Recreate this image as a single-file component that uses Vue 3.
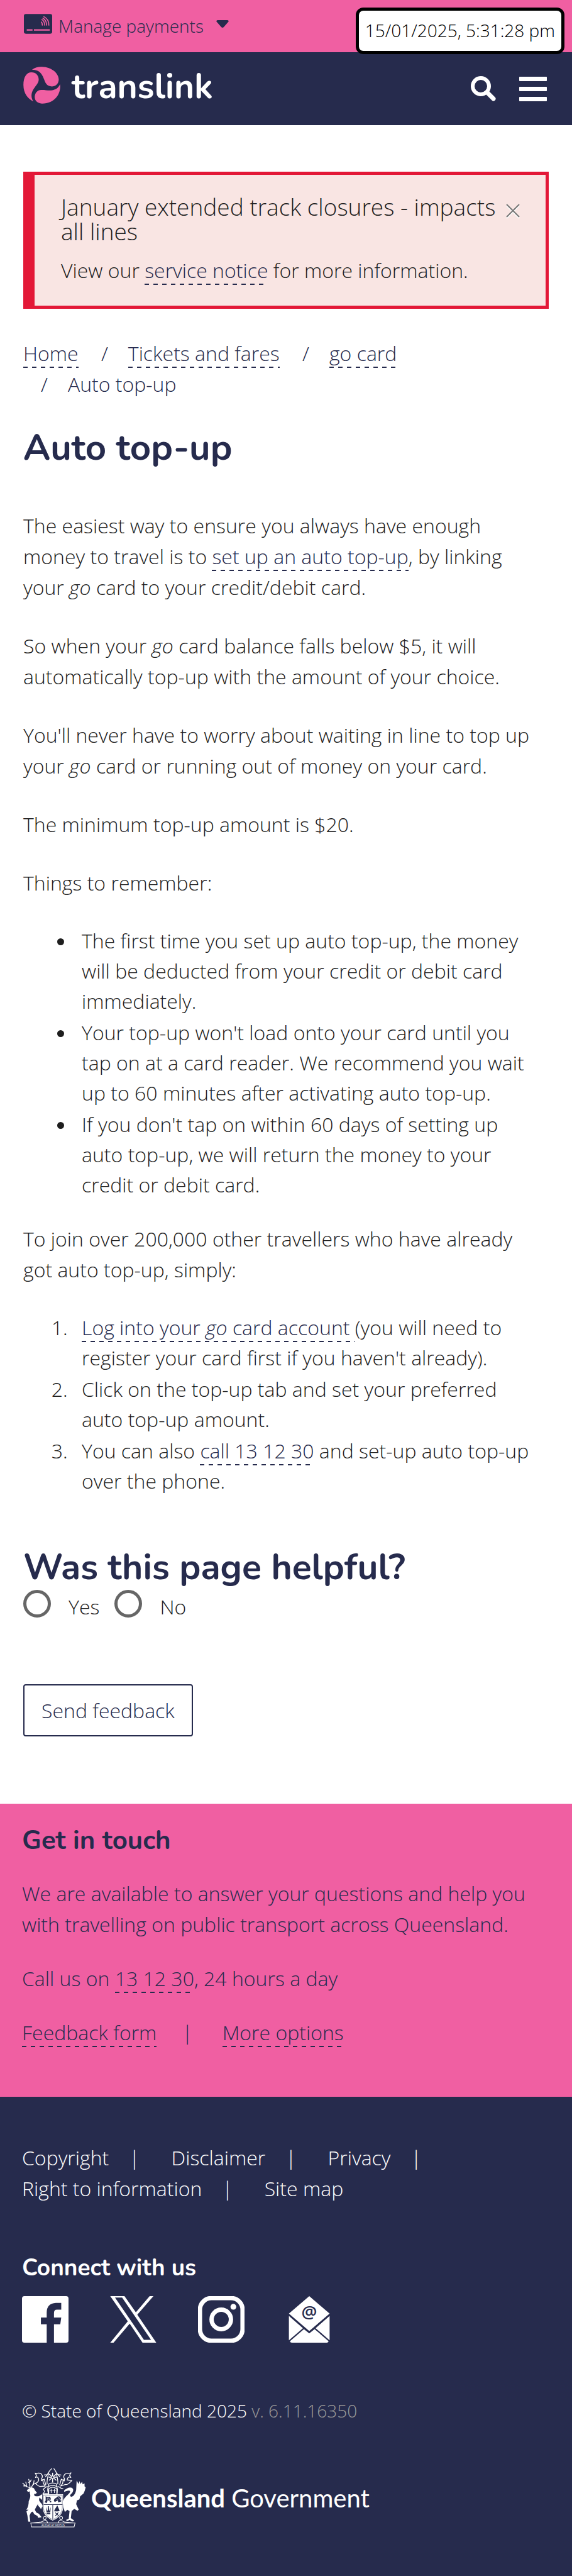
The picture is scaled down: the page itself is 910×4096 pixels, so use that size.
<script setup>
import { ref } from 'vue'

const alertOpen = ref(true)
const helpful = ref('')
const footerLinks = ['Copyright', 'Disclaimer', 'Privacy', 'Right to information', 'Site map']
</script>

<template>
  <div class="page">
    <header>
      <div class="topbar">
        <button class="manage" type="button">
          <svg class="card-icon" viewBox="0 0 59 41" aria-hidden="true">
            <rect width="59" height="41" rx="4" fill="#262b4d" />
            <g fill="none" stroke="#f05fa2" stroke-width="2">
              <path d="M36 16q3 3 2.500 8" />
              <path d="M37 11q7 4 6 13" />
              <path d="M39 8q9 5 8 16" />
              <path d="M41 5q12 6 11 19" />
            </g>
            <path d="M6 33h12M21 33h33" stroke="#f05fa2" stroke-width="3" />
          </svg>
          <span>Manage payments</span>
          <svg class="caret" viewBox="0 0 20 12" aria-hidden="true">
            <path d="M2 0h16q3 1 1 3l-7 8q-2 2-4 0l-7-8q-2-2 1-3z" fill="#262b4d" />
          </svg>
        </button>
        <time class="clock">15/01/2025, 5:31:28 pm</time>
      </div>
      <div class="navbar">
        <a class="brand" href="#">
          <svg viewBox="53 50 233 233" aria-hidden="true">
            <g fill="#f05fa2">
              <path d="M108 70C125 55 150 50 170 51C235 52 277 95 276 132C274 160 255 174 232 174C205 173 194 158 186 135C175 105 160 68 108 70Z" />
              <path d="M116 268C85 255 54 220 54 165C54 115 75 86 104 86C132 86 150 105 150 131C150 150 138 162 125 180C105 205 96 235 116 268Z" />
              <path d="M284 161C292 215 255 283 170 282C140 280 125 262 125 240C126 212 145 196 165 196C190 195 210 201 235 198C258 194 272 186 284 161Z" />
            </g>
          </svg>
          <span>translink</span>
        </a>
        <div class="nav-actions">
          <button class="icon-button" type="button" aria-label="Search">
            <svg class="search" viewBox="0 0 40 40" aria-hidden="true">
              <circle cx="16" cy="16" r="13" fill="none" stroke="#fff" stroke-width="6" />
              <path d="M26 26l10 10" stroke="#fff" stroke-width="7" stroke-linecap="round" />
            </svg>
          </button>
          <button class="icon-button burger" type="button" aria-label="Menu">
            <i></i><i></i><i></i>
          </button>
        </div>
      </div>
    </header>

    <main>
      <section v-if="alertOpen" class="alert" role="alert">
        <div class="alert-head">
          <h2>January extended track closures - impacts all lines</h2>
          <button type="button" aria-label="Close" @click="alertOpen = false">
            <svg viewBox="0 0 22 24" aria-hidden="true">
              <path d="M1 3l20 20M21 3L1 23" stroke="#fff" stroke-width="2" />
              <path d="M1 1l20 20M21 1L1 21" stroke="#777" stroke-width="2" />
            </svg>
          </button>
        </div>
        <p>View our <a href="#">service notice</a> for more information.</p>
      </section>

      <nav aria-label="Breadcrumb">
        <ol class="crumbs">
          <li><a href="#">Home</a></li>
          {{ ' ' }}
          <li><a href="#">Tickets and fares</a></li>
          {{ ' ' }}
          <li><a href="#">go card</a></li>
          {{ ' ' }}
          <li>Auto top-up</li>
        </ol>
      </nav>

      <h1>Auto top-up</h1>

      <article>
        <p>The easiest way to ensure you always have enough money to travel is to <a href="#">set up an auto top-up</a>, by linking your <em>go</em> card to your credit/debit card.</p>
        <p>So when your <em>go</em> card balance falls below $5, it will automatically top-up with the amount of your choice.</p>
        <p>You'll never have to worry about waiting in line to top up your <em>go</em> card or running out of money on your card.</p>
        <p>The minimum top-up amount is $20.</p>
        <p>Things to remember:</p>
        <ul>
          <li>The first time you set up auto top-up, the money will be deducted from your credit or debit card immediately.</li>
          <li>Your top-up won't load onto your card until you tap on at a card reader. We recommend you wait up to 60 minutes after activating auto top-up.</li>
          <li>If you don't tap on within 60 days of setting up auto top-up, we will return the money to your credit or debit card.</li>
        </ul>
        <p>To join over 200,000 other travellers who have already got auto top-up, simply:</p>
        <ol>
          <li><a href="#">Log into your <em>go</em> card account </a>(you will need to register your card first if you haven't already).</li>
          <li>Click on the top-up tab and set your preferred auto top-up amount.</li>
          <li>You can also <a href="#">call 13 12 30</a> and set-up auto top-up over the phone.</li>
        </ol>
      </article>

      <form class="feedback" @submit.prevent>
        <h2 id="helpful-title">Was this page helpful?</h2>
        <div class="radios" role="radiogroup" aria-labelledby="helpful-title">
          <input id="yes" v-model="helpful" type="radio" name="helpful" value="yes" />
          <label for="yes">Yes</label>
          <input id="no" v-model="helpful" type="radio" name="helpful" value="no" />
          <label for="no">No</label>
        </div>
        <button class="send" type="submit">Send feedback</button>
      </form>
    </main>

    <section class="touch">
      <h2>Get in touch</h2>
      <p>We are available to answer your questions and help you with travelling on public transport across Queensland.</p>
      <p>Call us on <a href="#">13 12 30</a>, 24 hours a day</p>
      <p class="touch-links"><a href="#">Feedback form</a><span>|</span><a href="#">More options</a></p>
    </section>

    <footer>
      <ul class="links">
        <li v-for="(link, i) in footerLinks" :key="link">
          <a href="#">{{ link }}</a><span v-if="i < footerLinks.length - 1">|</span>
        </li>
      </ul>

      <h2>Connect with us</h2>
      <div class="social">
        <a href="#" aria-label="Facebook">
          <svg viewBox="0 0 96 96"><path fill="#fff" d="M5 0H91Q96 0 96 5V91Q96 96 91 96H66V58H79L81 44H66V35Q66 28 72 28H81V14H70Q51 15 51 34V44H39V58H51V96H5Q0 96 0 91V5Q0 0 5 0Z" /></svg>
        </a>
        <a href="#" aria-label="X">
          <svg viewBox="0 0 97 98"><path fill="#fff" fill-rule="evenodd" d="M0 0H30L54 34L83 0H91L57 39L97 98H68L41 58L7 98H0L37 53ZM10 3L71 92H86L25 3Z" /></svg>
        </a>
        <a href="#" aria-label="Instagram">
          <svg viewBox="0 0 96 96"><g fill="none" stroke="#fff"><rect x="4" y="4" width="88" height="88" rx="24" stroke-width="9" /><circle cx="48" cy="48" r="20" stroke-width="9" /></g><circle cx="73" cy="22" r="6" fill="#fff" /></svg>
        </a>
        <a href="#" aria-label="Email">
          <svg viewBox="-6 0 96 96"><g fill="#fff"><path d="M42 0L84 36L42 72L0 36Z" /><path d="M0 41L29 66L0 91ZM84 41L55 66L84 91ZM31 68L42 77L53 68L82 93Q81 96 78 96H6Q3 96 2 93Z" /></g><text x="42" y="46" text-anchor="middle" font-family="Open Sans, sans-serif" font-size="36" font-weight="600" fill="#262b4d">@</text></svg>
        </a>
      </div>

      <p class="copyright">© State of Queensland 2025 <span>v. 6.11.16350</span></p>

      <a class="government" href="#">
        <svg viewBox="53 32 396 370" aria-hidden="true">
          <g fill="none" stroke="#fff" stroke-width="5" stroke-linecap="round" stroke-linejoin="round">
            <path d="M102 158C94 150 82 150 75 144L57 127M76 144L63 144M82 149L76 120M104 157C98 140 102 122 94 103M99 128L91 120M110 157C112 140 128 138 127 111M119 138L129 130M103 118L109 107" />
            <path d="M208 132C205 105 214 88 218 58M274 132C278 105 268 88 264 58M218 60C222 48 230 45 236 37M264 60C260 48 254 45 250 37M216 64L198 88M266 64L287 88M208 74L190 76M276 74L294 76" />
            <path d="M134 65C145 70 155 58 172 70C180 80 180 92 172 100L172 112L190 102L200 138M134 65L142 78L136 92C148 84 155 92 156 108C152 120 146 126 134 128C144 134 150 146 164 147L196 145L186 130L180 105" />
            <path d="M356 63C343 70 331 60 318 72C308 82 310 92 316 100L314 113L296 102L286 138M356 63L347 78L355 92C342 84 333 94 332 107L362 110L350 122C342 128 335 140 322 135L292 145L304 130L308 105" />
            <path d="M218 132C230 124 252 124 266 132V147C250 140 232 140 218 147Z" />
            <path d="M210 148C190 150 196 160 184 164C190 172 198 180 182 192L214 190M274 148C292 150 286 160 306 162M216 148C205 170 215 180 216 193M268 148C276 170 270 180 270 193" />
            <path d="M218 193V162Q242 142 268 162V193" />
            <path d="M233 163V186M226 171H240M253 163V186M246 171H260" stroke-width="4" />
            <path d="M222 72L263 108M263 72L222 108M242 65V120M220 90H266" stroke-width="6" />
          </g>
          <circle cx="242" cy="90" r="7" fill="#262b4d" stroke="#fff" stroke-width="3" />
          <g fill="#fff">
            <path d="M82 171C92 162 101 157 111 154C122 154 130 160 132 170L145 187L136 194C130 190 127 193 128 201C134 211 145 208 158 207L177 196V231L160 216L158 232C166 252 178 252 180 270L170 288C163 273 149 270 151 256C145 268 136 280 132 292L141 309L157 316L174 338L153 342L148 330L128 319L119 303L108 309L99 328L104 366L91 365L86 328L80 302L93 291L79 292C90 278 94 257 94 239C101 223 108 207 101 190L101 178L89 181Z" />
            <path d="M315 169C330 162 341 148 361 156C376 165 370 183 356 195C347 203 350 210 359 211C374 208 384 190 388 168L391 111L403 132L409 114L414 132L425 118L428 134L440 128L440 147L447 153L441 174L434 191L413 208L408 228L393 234L388 257L404 291L396 298L376 286L360 300L355 344L377 359L365 364L348 355L329 362L326 354L342 347L347 300L333 292L318 306L310 280L304 246C309 223 324 211 339 196C350 185 354 176 347 174C336 171 327 176 313 181Z" />
            <path d="M180 196H307V262C312 315 279 343 243 359C207 342 176 315 181 262Z" />
          </g>
          <g fill="none" stroke="#262b4d" stroke-width="2">
            <path d="M185 201H302V264C307 310 277 337 243 353C210 337 181 310 186 264Z" />
            <path d="M186 260H303M243 262V352" stroke-width="4" />
          </g>
          <g fill="#262b4d">
            <path d="M199 207C213 222 219 205 228 215C237 231 221 241 211 235L206 250L192 245L199 235Z" /><circle cx="229" cy="241" r="5" />
            <path d="M250 237C250 220 267 219 272 210C288 202 302 219 287 233C299 232 300 243 285 243C269 252 282 226 267 237L256 243Z" />
            <path d="M203 274L211 301L214 270H219L220 301L230 275L228 305H204ZM205 309H228V319H205ZM271 265L286 298L276 302H253V294Z" />
          </g>
          <g fill="none" stroke="#fff" stroke-width="2"><circle cx="215" cy="226" r="7" /><path d="M275 217Q288 216 282 228M264 226L276 232" /></g>
          <path d="M258 309L280 329M278 308L259 330" stroke="#262b4d" stroke-width="5" />
          <g fill="none" stroke="#fff" stroke-width="4">
            <path d="M107 374L111 398H375L381 374ZM112 374L172 367C190 361 203 349 202 338C196 327 179 336 186 348C195 362 208 350 211 374M374 374L315 367C299 361 285 349 285 338C292 326 310 335 302 348C292 362 280 350 276 374" />
          </g>
          <text x="245" y="393" text-anchor="middle" font-family="Open Sans, sans-serif" font-size="17" fill="#fff">AUDAX AT FIDELIS</text>
        </svg>
        <span><b>Queensland</b> Government</span>
      </a>
    </footer>
  </div>
</template>

<style>
body {
  margin: 0;
  background: #fff;
}
</style>

<style scoped>
.page {
  font: 300 32px/49px "Open Sans", sans-serif;
  color: #1e1e1e;
}
h1,
h2,
p,
ul,
ol {
  margin: 0;
  padding: 0;
}
h1,
h2 {
  font-family: Nunito, Lato, sans-serif;
  font-weight: 700;
  color: #262b4d;
}
button {
  margin: 0;
  padding: 0;
  border: 0;
  background: none;
  color: inherit;
  font: inherit;
  cursor: pointer;
}
a {
  color: #262b4d;
  text-decoration: none;
}
svg {
  display: block;
}
main a,
.touch a {
  padding-bottom: 2px;
  background: repeating-linear-gradient(90deg, #262b4d 0 7px, transparent 7px 14px) left bottom / 100% 2px no-repeat;
}

.topbar {
  position: relative;
  height: 83px;
  padding-left: 38px;
  background: #f05fa2;
  color: #262b4d;
  font-size: 28px;
}
.manage {
  display: flex;
  align-items: center;
  height: 76px;
}
.card-icon {
  width: 45px;
  height: 32px;
  margin-right: 10px;
}
.manage span {
  padding-top: 6px;
}
.caret {
  width: 20px;
  height: 12px;
  margin-left: 20px;
}
.clock {
  position: absolute;
  top: 12px;
  right: 12px;
  padding: 7px 10px 8px;
  border: 5px solid #000;
  border-radius: 12px;
  background: #fff;
  color: #000;
}
.navbar {
  display: flex;
  justify-content: space-between;
  align-items: center;
  height: 116px;
  padding: 0 40px 0 37px;
  background: #262b4d;
}
.brand {
  display: flex;
  align-items: center;
  gap: 18px;
  height: 104px;
  align-self: flex-start;
  color: #fff;
  font: 700 55px/60px Nunito, Lato, sans-serif;
}
.brand svg {
  width: 59px;
  height: 59px;
}
.brand span {
  padding-top: 6px;
}
.nav-actions {
  display: flex;
  align-items: center;
  gap: 37px;
}
.search {
  width: 40px;
  height: 40px;
}
.burger {
  display: grid;
  gap: 9px;
  width: 44px;
}
.burger i {
  height: 7px;
  border-radius: 1px;
  background: #fff;
}

main {
  padding: 74px 37px 107px;
}
.alert {
  padding: 31px 41px 32px 42px;
  border: 5px solid #e31837;
  border-left-width: 18px;
  background: #f9e5e3;
}
.alert-head {
  display: flex;
  justify-content: space-between;
  margin-bottom: 18px;
}
.alert h2 {
  font: 300 37px/39px "Open Sans", sans-serif;
  color: #1e1e1e;
}
.alert button {
  align-self: flex-start;
  flex: none;
  padding-top: 15px;
}
.alert button svg {
  width: 22px;
  height: 24px;
}
.crumbs {
  margin-top: 46px;
  list-style: none;
  color: #262b4d;
}
.crumbs li {
  display: inline-block;
}
.crumbs li + li::before {
  content: "/";
  padding: 0 32px 0 28px;
}
h1 {
  margin: 45px 0 67px;
  font-size: 58px;
  line-height: 64px;
}
article {
  padding-right: 18px;
}
article p {
  margin-bottom: 44px;
}
article ul,
article ol {
  padding-left: 83px;
}
article ul {
  margin-bottom: 37px;
}
article li {
  margin-bottom: 2px;
  padding-left: 10px;
  line-height: 48px;
}
article ol {
  padding-left: 79px;
}
article ol li {
  padding-left: 14px;
}
.feedback h2 {
  margin-top: 81px;
  font-size: 57px;
  line-height: 64px;
}
.radios {
  display: flex;
  align-items: flex-start;
  margin: 4px 0 99px;
}
.radios input {
  appearance: none;
  width: 44px;
  height: 44px;
  margin: 0;
  border: 5px solid #666;
  border-radius: 50%;
}
.radios input:checked {
  background: radial-gradient(#262b4d 45%, transparent 50%);
}
.radios label {
  padding: 2px 24px 0 28px;
}
.send {
  padding: 15px 27px;
  border: 2px solid #262b4d;
  border-radius: 4px;
  color: #262b4d;
}

.touch {
  padding: 36px 35px 78px;
  background: #f05fa2;
  color: #262b4d;
}
.touch h2 {
  font-size: 42px;
  line-height: 45px;
}
.touch p {
  margin-top: 37px;
}
.touch-links span {
  margin: 0 47px 0 40px;
}

footer {
  padding: 72px 35px 77px;
  background: #262b4d;
  color: #fff;
}
footer a,
footer h2 {
  color: #fff;
}
.links {
  display: flex;
  flex-wrap: wrap;
  max-width: 730px;
  list-style: none;
}
.links span {
  margin: 0 50px 0 32px;
}
footer h2 {
  margin: 80px 0 23px;
  font-size: 37px;
  line-height: 44px;
}
.social {
  display: flex;
  gap: 66px;
}
.social svg {
  width: 74px;
  height: 74px;
}
.copyright {
  margin: 88px 0 71px;
  font-size: 28px;
  line-height: 40px;
}
.copyright span {
  color: #999;
}
.government {
  display: flex;
  align-items: center;
  gap: 8px;
  font: 400 40px/48px Lato, sans-serif;
}
.government svg {
  width: 102px;
  height: 95px;
}
.government b {
  font-weight: 700;
}
</style>
